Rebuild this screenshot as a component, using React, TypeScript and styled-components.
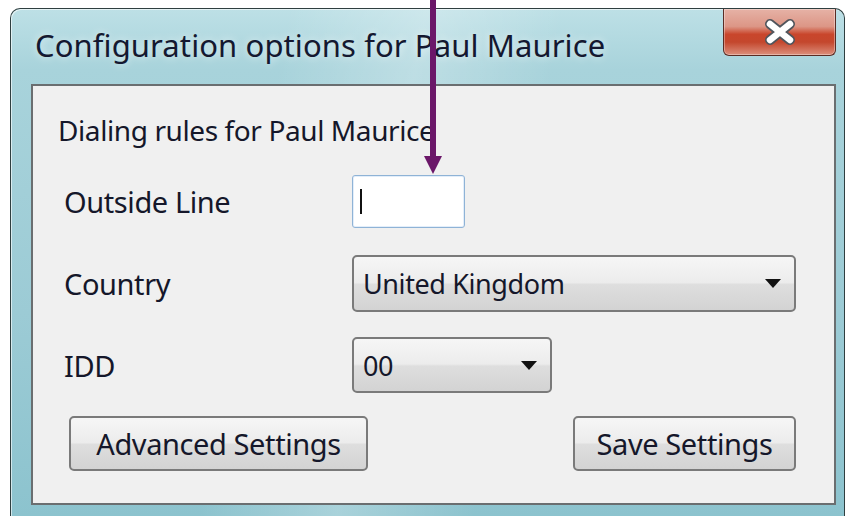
import React from 'react'
import styled, { createGlobalStyle } from 'styled-components'

const GlobalStyle = createGlobalStyle`
  html, body {
    margin: 0;
    padding: 0;
    background: #ffffff;
  }
  body {
    font-family: "Noto Sans", "Open Sans", sans-serif;
    color: #15172a;
  }
`

const Page = styled.div`
  position: relative;
  width: 847px;
  height: 517px;
  padding: 8px 2px 0 10px;
  box-sizing: border-box;
  overflow: hidden;
`

const Window = styled.div`
  height: 508px;
  box-sizing: border-box;
  border: 1px solid #2f3f40;
  border-bottom: none;
  border-radius: 10px 10px 0 0;
  padding: 0 8px 11px 20px;
  background:
    linear-gradient(100deg, rgba(255,255,255,0) 30%, rgba(255,255,255,0.25) 45%, rgba(255,255,255,0) 60%),
    linear-gradient(180deg, #bde0e6 0%, #a8d3db 12%, #9ccbd5 60%, #8cc3ce 100%);
  box-shadow: inset 1px 1px 0 rgba(255,255,255,0.6);
  display: flex;
  flex-direction: column;
`

const TitleBar = styled.div`
  height: 75px;
  flex: none;
  display: flex;
  justify-content: space-between;
  align-items: flex-start;
`

const Title = styled.div`
  margin: 16px 0 0 4px;
  font-size: 31px;
  line-height: 40px;
  letter-spacing: 0.1px;
  color: #141830;
  text-shadow: 0 0 8px rgba(255,255,255,0.7);
  white-space: nowrap;
`

const CloseButton = styled.div`
  width: 113px;
  height: 47px;
  box-sizing: border-box;
  border: 1px solid #5a2c24;
  border-top: none;
  border-radius: 0 0 6px 6px;
  background: linear-gradient(180deg, #e6b2a6 0%, #dc9686 38%, #c9462c 55%, #c4472d 72%, #dc8f7c 100%);
  box-shadow: inset 0 0 0 1px rgba(255,255,255,0.35);
  display: flex;
  align-items: center;
  justify-content: center;
`

const Client = styled.div`
  flex: 1;
  box-sizing: border-box;
  border: 2px solid #6a6e70;
  background: #f0f0f0;
  padding: 28px 38px 0 25px;
  display: flex;
  flex-direction: column;
`

const Heading = styled.div`
  font-size: 28px;
  line-height: 32px;
  letter-spacing: -0.4px;
  margin-bottom: 29px;
`

const Row = styled.div<{ height: number; gap: number }>`
  display: flex;
  align-items: center;
  height: ${p => p.height}px;
  margin-bottom: ${p => p.gap}px;
  padding-left: 6px;
`

const Label = styled.div`
  width: 288px;
  flex: none;
  font-size: 29px;
  letter-spacing: -0.4px;
`

const TextBox = styled.div`
  width: 113px;
  height: 100%;
  box-sizing: border-box;
  border: 1px solid #8fb3d6;
  border-radius: 3px;
  background: #ffffff;
  box-shadow: inset 0 0 0 1px #e3eefa;
  display: flex;
  align-items: center;
  padding-left: 7px;
`

const Caret = styled.span`
  width: 2px;
  height: 25px;
  background: #111;
`

const Select = styled.div<{ width: number }>`
  width: ${p => p.width}px;
  height: 100%;
  box-sizing: border-box;
  border: 2px solid #7a7a7a;
  border-radius: 5px;
  background: linear-gradient(180deg, #f6f6f6 0%, #ececec 48%, #dedede 52%, #d3d3d3 100%);
  display: flex;
  align-items: center;
  justify-content: space-between;
  padding: 0 13px 0 9px;
  font-size: 27px;
  letter-spacing: -0.4px;
`

const Arrow = styled.span`
  width: 0;
  height: 0;
  border-left: 8px solid transparent;
  border-right: 8px solid transparent;
  border-top: 9px solid #111;
`

const ButtonRow = styled.div`
  display: flex;
  justify-content: space-between;
  padding-left: 11px;
  height: 55px;
`

const Button = styled.div<{ width: number }>`
  width: ${p => p.width}px;
  height: 100%;
  box-sizing: border-box;
  border: 2px solid #7a7a7a;
  border-radius: 5px;
  background: linear-gradient(180deg, #f6f6f6 0%, #ececec 48%, #dedede 52%, #d3d3d3 100%);
  display: flex;
  align-items: center;
  justify-content: center;
  font-size: 29px;
  letter-spacing: -0.4px;
`

const Pointer = styled.svg`
  position: absolute;
  left: 422px;
  top: 0;
`

const CloseGlyph = () => (
  <svg width="34" height="26" viewBox="0 0 34 26">
    <path d="M7 5 L27 21 M27 5 L7 21" stroke="#50555c" strokeWidth="10" strokeLinecap="round" />
    <path d="M7 5 L27 21 M27 5 L7 21" stroke="#ffffff" strokeWidth="6.5" strokeLinecap="round" />
  </svg>
)

const App = () => {
  return (
    <Page>
      <GlobalStyle />
      <Window>
        <TitleBar>
          <Title>Configuration options for Paul Maurice</Title>
          <CloseButton>
            <CloseGlyph />
          </CloseButton>
        </TitleBar>
        <Client>
          <Heading>Dialing rules for Paul Maurice</Heading>
          <Row height={53} gap={27}>
            <Label>Outside Line</Label>
            <TextBox>
              <Caret />
            </TextBox>
          </Row>
          <Row height={57} gap={25}>
            <Label>Country</Label>
            <Select width={446}>
              United Kingdom
              <Arrow />
            </Select>
          </Row>
          <Row height={56} gap={23}>
            <Label>IDD</Label>
            <Select width={200}>
              00
              <Arrow />
            </Select>
          </Row>
          <ButtonRow>
            <Button width={299}>Advanced Settings</Button>
            <Button width={223}>Save Settings</Button>
          </ButtonRow>
        </Client>
      </Window>
      <Pointer width="22" height="176" viewBox="0 0 22 176">
        <rect x="8" y="0" width="6" height="160" fill="#6b1769" />
        <polygon points="2,156 20,156 11,174" fill="#6b1769" />
      </Pointer>
    </Page>
  )
}

export default App
